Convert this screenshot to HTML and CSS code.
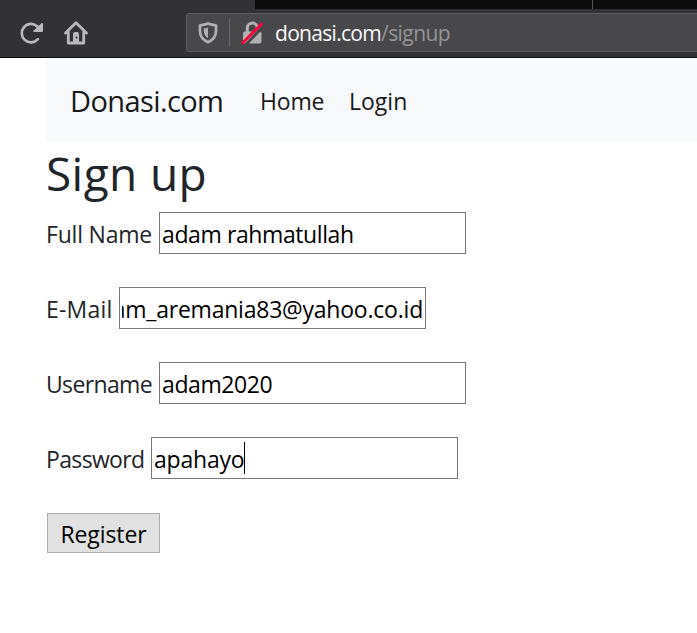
FILE: index.html
```
<!DOCTYPE html>
<html lang="en">
<head>
<meta charset="utf-8">
<title>Sign up</title>
<link rel="stylesheet" href="styles.css">
</head>
<body>
<header class="browser">
  <div class="tabs"><span class="tab-active"></span><span class="tab"></span><span class="tab"></span></div>
  <div class="toolbar">
    <svg class="tool reload" width="26" height="26" viewBox="0 0 26 26" fill="none" stroke="#b9b9ba" stroke-width="2.7" stroke-linecap="round"><path d="M18.9 19.2A9.2 9.2 0 1 1 18 6.2L20.5 8.6"/><path d="M15 12H22.8Q24 12 24 10.8V3.6Q23.6 2.4 22.4 3.3L14.4 10.8Q13.8 12 15 12Z" fill="#b9b9ba" stroke="none"/></svg>
    <svg class="tool home" width="26" height="26" viewBox="0 0 26 26" fill="none" stroke="#b9b9ba" stroke-width="2.8" stroke-linecap="round" stroke-linejoin="round"><path d="M2.5 13 13 2.7 23.5 13M5.3 12V23H20.7V12"/><path d="M10 22V13.8Q10 12 12 12H14Q16 12 16 13.8V22Z" fill="#b9b9ba" stroke="none"/><circle cx="13.5" cy="17.4" r="1" fill="#323234" stroke="none"/></svg>
    <div class="urlbar">
      <svg class="shield" width="20" height="22" viewBox="0 0 20 22"><path d="M10 1.6Q13.5 3 18 3.3V9.5Q17.8 16.8 10 20.2Q2.2 16.8 2 9.5V3.3Q6.5 3 10 1.6Z" fill="none" stroke="#b1b1b3" stroke-width="2.7" stroke-linejoin="round"/><path d="M10 5.6V16.2Q6 13.7 5.8 9.3V6.6Q8 6.4 10 5.6Z" fill="#b1b1b3"/></svg>
      <span class="divider"></span>
      <svg class="lock" width="22" height="24" viewBox="0 0 22 24"><path d="M6.3 11V7A5 5 0 0 1 16.3 7V11" fill="none" stroke="#b1b1b3" stroke-width="3"/><rect x="2" y="10.5" width="18.5" height="12" rx="2" fill="#b1b1b3"/><path d="M4 24.5 22.5 5" stroke="#48484a" stroke-width="3"/><path d="M1.8 21.8 20.4 3" stroke="#ff0039" stroke-width="2.8" stroke-linecap="round"/></svg>
      <span class="url">donasi.com<span class="path">/signup</span></span>
    </div>
  </div>
</header>
<main>
  <nav><a class="brand">Donasi.com</a><a class="nav-home">Home</a><a class="nav-login">Login</a></nav>
  <h1>Sign up</h1>
  <form>
    <div class="row name"><label for="name">Full Name</label><input id="name" value="adam rahmatullah"></div>
    <div class="row email"><label for="email">E-Mail</label><input id="email" value="adam_aremania83@yahoo.co.id"></div>
    <div class="row user"><label for="user">Username</label><input id="user" value="adam2020"></div>
    <div class="row pass"><label for="pass">Password</label><input id="pass" value="apahayo"><span class="caret"></span></div>
    <button type="button">Register</button>
  </form>
</main>
</body>
</html>
```
FILE: styles.css
```
* { box-sizing: border-box; }
body {
  margin: 0;
  height: 633px;
  overflow: hidden;
  background: #fff;
  color: #212529;
  font: 23px/36px "Open Sans", "Noto Sans", sans-serif;
  white-space: nowrap;
}
.browser { height: 58px; background: #323234; border-bottom: 1px solid #0c0c0d; }
.tabs { display: flex; height: 9px; }
.tab-active { width: 255px; }
.tab { width: 338px; background: #0c0c0d; border-right: 1px solid #57575a; }
.tab:last-child { flex: 1; border: 0; }
.toolbar { display: flex; height: 48px; padding-top: 4px; }
.tool { flex: none; margin-top: 7px; }
.reload { margin-left: 19px; }
.home { margin-left: 18px; }
.urlbar {
  display: flex;
  align-items: center;
  flex: none;
  width: 530px;
  height: 39px;
  margin-left: 97px;
  padding-left: 11px;
  background: #48484a;
  border: 1px solid #5c5c5e;
  border-radius: 3px;
}
.divider { width: 1px; height: 28px; margin: 0 11px; background: #66666a; }
.url { margin-left: 12px; color: #f9f9fa; font-size: 21px; letter-spacing: -0.7px; }
.path { color: #949496; letter-spacing: -0.55px; }
main { padding-left: 46px; }
nav { display: flex; align-items: center; height: 84px; padding: 1px 0 0 24px; background: #f8f9fb; color: #18191a; }
.brand { width: 190px; font-size: 29px; letter-spacing: -0.6px; }
.nav-home { width: 89px; letter-spacing: -0.2px; }
h1 { margin: 0; height: 70px; font-size: 46px; font-weight: 400; line-height: 62px; letter-spacing: 0.4px; }
.row { display: flex; position: relative; height: 42px; margin-bottom: 33px; line-height: 44px; }
.name label, .user label { width: 113px; }
.name label { letter-spacing: -0.2px; }
.user label { letter-spacing: -0.65px; }
.email label { width: 73px; letter-spacing: 0.2px; }
.pass label { width: 105px; letter-spacing: -0.65px; }
input {
  width: 307px;
  height: 42px;
  padding: 1px 2px 0;
  border: 1px solid #7a7a7a;
  outline: 0;
  background: #fff;
  color: #000;
  font: inherit;
  letter-spacing: -0.4px;
  line-height: 36px;
}
.email input { direction: rtl; letter-spacing: -0.22px; }
.pass input { letter-spacing: -0.2px; }
.caret { position: absolute; left: 198px; top: 5px; width: 1px; height: 32px; background: #000; }
button {
  display: block;
  width: 113px;
  height: 40px;
  margin: 34px 0 0 1px;
  padding: 1px 0 0;
  border: 1px solid #adadad;
  background: #e1e1e1;
  color: #000;
  font: inherit;
  letter-spacing: -0.1px;
}
```
